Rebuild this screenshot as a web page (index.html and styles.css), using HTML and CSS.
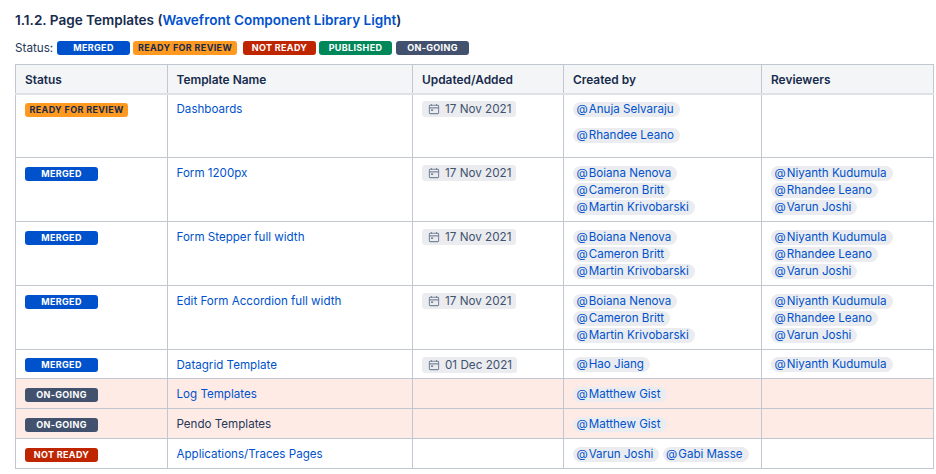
FILE: index.html
```html
<!DOCTYPE html>
<html lang="en">
<head>
<meta charset="utf-8">
<title>Page Templates</title>
<link rel="stylesheet" href="styles.css">
</head>
<body>
<svg class="defs" width="0" height="0" aria-hidden="true"><defs><symbol id="cal" viewBox="0 0 12 12"><path d="M2.2 2.2h7.6a.8.8 0 0 1 .8.8v6.8a.8.8 0 0 1-.8.8H2.2a.8.8 0 0 1-.8-.8V3a.8.8 0 0 1 .8-.8zM1.4 4.9h9.2" fill="none" stroke="currentColor" stroke-width="1.1"/><path d="M3.4 1v2M8.6 1v2" stroke="currentColor" stroke-width="1.1"/><rect x="3" y="6.4" width="2.2" height="1.6" fill="currentColor"/></symbol></defs></svg>
<h1 class="title">1.1.2. Page Templates (<a href="#">Wavefront Component Library Light</a>)</h1>
<p class="legend"><span class="label">Status:</span><span class="loz blue">MERGED</span><span class="loz orange wide">READY FOR REVIEW</span><span class="loz red gap">NOT READY</span><span class="loz green">PUBLISHED</span><span class="loz slate late">ON-GOING</span></p>
<table class="grid">
<colgroup><col class="c1"><col class="c2"><col class="c3"><col class="c4"><col class="c5"></colgroup>
<thead><tr><th>Status</th><th>Template Name</th><th>Updated/Added</th><th>Created by</th><th>Reviewers</th></tr></thead>
<tbody>
<tr class="r63"><td><span class="loz orange">READY FOR REVIEW</span></td><td><a href="#">Dashboards</a></td><td><span class="date"><svg class="ico"><use href="#cal"/></svg>17 Nov 2021</span></td><td class="people"><div class="spaced"><span class="men"><i>@</i>Anuja Selvaraju</span></div><div class="spaced"><span class="men"><i>@</i>Rhandee Leano</span></div></td><td></td></tr>
<tr class="r64"><td><span class="loz blue">MERGED</span></td><td><a href="#">Form 1200px</a></td><td><span class="date"><svg class="ico"><use href="#cal"/></svg>17 Nov 2021</span></td><td class="people"><div><span class="men"><i>@</i>Boiana Nenova</span></div><div><span class="men"><i>@</i>Cameron Britt</span></div><div><span class="men"><i>@</i>Martin Krivobarski</span></div></td><td class="people"><div><span class="men"><i>@</i>Niyanth Kudumula</span></div><div><span class="men"><i>@</i>Rhandee Leano</span></div><div><span class="men"><i>@</i>Varun Joshi</span></div></td></tr>
<tr class="r64"><td><span class="loz blue">MERGED</span></td><td><a href="#">Form Stepper full width</a></td><td><span class="date"><svg class="ico"><use href="#cal"/></svg>17 Nov 2021</span></td><td class="people"><div><span class="men"><i>@</i>Boiana Nenova</span></div><div><span class="men"><i>@</i>Cameron Britt</span></div><div><span class="men"><i>@</i>Martin Krivobarski</span></div></td><td class="people"><div><span class="men"><i>@</i>Niyanth Kudumula</span></div><div><span class="men"><i>@</i>Rhandee Leano</span></div><div><span class="men"><i>@</i>Varun Joshi</span></div></td></tr>
<tr class="r64"><td><span class="loz blue">MERGED</span></td><td><a href="#">Edit Form Accordion full width</a></td><td><span class="date"><svg class="ico"><use href="#cal"/></svg>17 Nov 2021</span></td><td class="people"><div><span class="men"><i>@</i>Boiana Nenova</span></div><div><span class="men"><i>@</i>Cameron Britt</span></div><div><span class="men"><i>@</i>Martin Krivobarski</span></div></td><td class="people"><div><span class="men"><i>@</i>Niyanth Kudumula</span></div><div><span class="men"><i>@</i>Rhandee Leano</span></div><div><span class="men"><i>@</i>Varun Joshi</span></div></td></tr>
<tr class="r29"><td><span class="loz blue">MERGED</span></td><td><a href="#">Datagrid Template</a></td><td><span class="date"><svg class="ico"><use href="#cal"/></svg>01 Dec 2021</span></td><td class="people"><div><span class="men"><i>@</i>Hao Jiang</span></div></td><td class="people"><div><span class="men"><i>@</i>Niyanth Kudumula</span></div></td></tr>
<tr class="r30 pink"><td><span class="loz slate">ON-GOING</span></td><td><a href="#">Log Templates</a></td><td></td><td class="people"><div><span class="men"><i>@</i>Matthew Gist</span></div></td><td></td></tr>
<tr class="r30 pink"><td><span class="loz slate">ON-GOING</span></td><td>Pendo Templates</td><td></td><td class="people"><div><span class="men"><i>@</i>Matthew Gist</span></div></td><td></td></tr>
<tr class="r30"><td><span class="loz red">NOT READY</span></td><td><a href="#">Applications/Traces Pages</a></td><td></td><td class="people"><div><span class="men"><i>@</i>Varun Joshi</span> <span class="men"><i>@</i>Gabi Masse</span></div></td><td></td></tr>
</tbody>
</table>
</body>
</html>
```
FILE: styles.css
```css
html, body { margin: 0; padding: 0; background: #fff; overflow: hidden; }
body { font-family: Inter, "Liberation Sans", sans-serif; font-size: 12px; color: #172b4d; padding: 12px 0 0 15px; }
.defs { position: absolute; }
a { color: #0052cc; text-decoration: none; }
.title { margin: 0; font-size: 13.55px; font-weight: 600; line-height: 16px; color: #172b4d; }
.legend { margin: 12px 0 0; height: 16px; line-height: 16px; font-size: 11.7px; display: flex; align-items: center; white-space: pre; color: #253858; }
.label { width: 42px; }
.legend .loz { margin-left: 3px; }
.legend .label + .loz { margin-left: 0; }
.legend .gap { margin-left: 6px; }
.legend .late { margin-left: 4px; }
.legend .wide { width: 104px; }
.loz { display: inline-block; box-sizing: border-box; min-width: 73px; height: 14px; line-height: 14px; padding: 0 4.5px; border-radius: 3px; font-size: 9px; font-weight: 700; text-align: center; letter-spacing: .35px; color: #fff; vertical-align: top; white-space: nowrap; }
td .loz { margin-top: 2px; }
.blue { background: #0052cc; }
.orange { background: #ff991f; color: #172b4d; }
.red { background: #bf2600; }
.green { background: #00875a; }
.slate { background: #42526e; }
.grid { margin-top: 8px; border-collapse: collapse; table-layout: fixed; width: 918px; }
.c1 { width: 151.5px; } .c2 { width: 245.5px; } .c3 { width: 151px; } .c4 { width: 198px; } .c5 { width: 172px; }
th, td { border: 1px solid #c1c7d0; padding: 0 9px; vertical-align: top; text-align: left; }
th { height: 28px; background: #f4f5f7; font-size: 11.9px; font-weight: 600; color: #172b4d; border-bottom: 2px solid #dfe1e6; vertical-align: middle; }
td { box-sizing: border-box; padding-top: 7px; color: #253858; line-height: 16px; font-size: 11.6px; }
.r63 td { height: 63px; padding-top: 6px; }
.r64 td { height: 64px; }
.r30 td { height: 30px; }
.r29 td { height: 29px; }
.r29 td .loz { margin-top: 1px; }
.r64 td.people, .r30 td.people { padding-top: 8px; }
.r63 td.people { padding-top: 7px; }
.pink td { background: #ffebe6; }
.date { display: inline-flex; align-items: center; height: 16px; padding: 0 5px 0 6px; border-radius: 3px; background: #ebecf0; color: #42526e; font-size: 11.7px; white-space: nowrap; vertical-align: top; }
.ico { width: 12px; height: 12px; margin-right: 5px; color: #7a869a; }
.men { display: inline-block; height: 15px; line-height: 15px; padding: 0 6px 0 3.5px; border-radius: 8px; background: #ebecf0; color: #0052cc; font-size: 11.6px; white-space: nowrap; vertical-align: top; }
.men i { font-style: normal; margin-right: 1px; }
.people div { height: 17px; line-height: 15px; }
.people .spaced { height: 26px; }
```
